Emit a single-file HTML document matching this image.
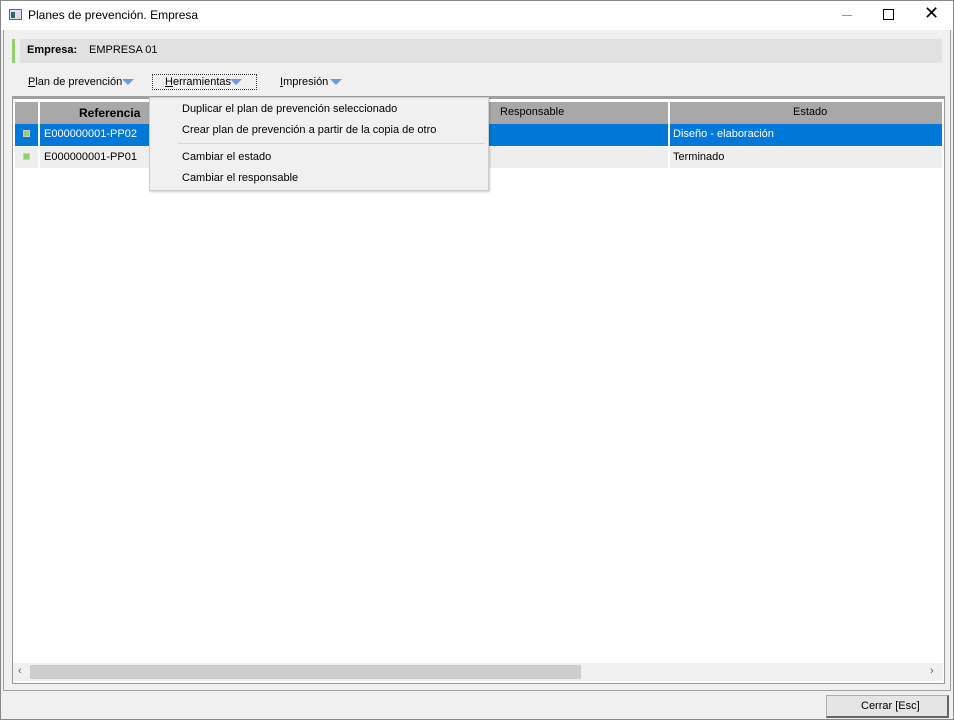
<!DOCTYPE html><html><head><style>
body{margin:0;width:954px;height:720px;position:relative;background:#f0f0f0;font-family:"Liberation Sans",sans-serif;font-size:12px;color:#000;overflow:hidden}
div{position:absolute;box-sizing:border-box}
.t{white-space:nowrap}
</style></head><body>
<div style="left:0;top:0;width:954px;height:720px;border:1px solid #888"></div>
<div style="left:1px;top:1px;width:952px;height:29px;background:#fff"></div>
<div style="left:9px;top:9px;width:13px;height:11px;border:1px solid #666;background:#dde"><div style="left:1px;top:2px;width:4px;height:6px;background:#2a6a6a"></div></div>
<div class="t" style="left:28px;top:8px;font-size:12px">Planes de prevención. Empresa</div>
<div style="left:842px;top:15px;width:10px;height:1px;background:#999"></div>
<div style="left:883px;top:9px;width:11px;height:11px;border:1px solid #000"></div>
<div class="t" style="left:924px;top:3px;font-size:18px;font-weight:100">✕</div>
<div style="left:3px;top:30px;width:948px;height:661px;border:1px solid #a0a0a0;border-top:none"></div>
<div style="left:12px;top:39px;width:3px;height:24px;background:#8fd16a"></div>
<div style="left:20px;top:39px;width:922px;height:24px;background:#e1e1e1"></div>
<div class="t" style="left:27px;top:44px;font-weight:bold;font-size:11px">Empresa:</div>
<div class="t" style="left:89px;top:44px;font-size:11px">EMPRESA 01</div>
<div class="t" style="left:28px;top:76px;font-size:11px"><u>P</u>lan de prevención</div>
<div style="left:122px;top:79px;width:0;height:0;border-left:6px solid transparent;border-right:6px solid transparent;border-top:6px solid #6b9be0"></div>
<div style="left:152px;top:74px;width:105px;height:16px;border:1px dotted #333"></div>
<div class="t" style="left:165px;top:76px;font-size:11px"><u>H</u>erramientas</div>
<div style="left:230px;top:79px;width:0;height:0;border-left:6px solid transparent;border-right:6px solid transparent;border-top:6px solid #6b9be0"></div>
<div class="t" style="left:280px;top:76px;font-size:11px"><u>I</u>mpresión</div>
<div style="left:330px;top:79px;width:0;height:0;border-left:6px solid transparent;border-right:6px solid transparent;border-top:6px solid #6b9be0"></div>
<div style="left:12px;top:96px;width:933px;height:588px;border:1px solid #999;border-top:3px solid #a0a0a0;background:#fff"></div>
<div style="left:15px;top:102px;width:927px;height:22px;background:#a8a8a8"></div>
<div style="left:38px;top:102px;width:2px;height:66px;background:#fff"></div>
<div style="left:668px;top:102px;width:2px;height:66px;background:#fff"></div>
<div class="t" style="left:79px;top:106px;font-weight:bold;font-size:12px">Referencia</div>
<div class="t" style="left:500px;top:106px;font-size:11px">Responsable</div>
<div class="t" style="left:793px;top:106px;font-size:11px">Estado</div>
<div style="left:15px;top:124px;width:927px;height:22px;background:#0078d7"></div>
<div style="left:38px;top:124px;width:2px;height:22px;background:#fff"></div>
<div style="left:668px;top:124px;width:2px;height:22px;background:#fff"></div>
<div style="left:15px;top:146px;width:927px;height:22px;background:#eee;border-top:1px solid #fff"></div>
<div style="left:38px;top:146px;width:2px;height:22px;background:#fff"></div>
<div style="left:668px;top:146px;width:2px;height:22px;background:#fff"></div>
<div style="left:23px;top:130px;width:7px;height:7px;background:#8fd16a;border:1px solid #ccc"></div>
<div style="left:23px;top:153px;width:7px;height:7px;background:#8fd16a;border:1px solid #ccc"></div>
<div class="t" style="left:44px;top:128px;color:#fff;font-size:11px">E000000001-PP02</div>
<div class="t" style="left:44px;top:151px;font-size:11px">E000000001-PP01</div>
<div class="t" style="left:673px;top:128px;color:#fff;font-size:11px">Diseño - elaboración</div>
<div class="t" style="left:673px;top:151px;font-size:11px">Terminado</div>
<div style="left:149px;top:97px;width:340px;height:94px;background:#f0f0f0;border:1px solid #ccc;box-shadow:1px 1px 2px rgba(0,0,0,.2)"></div>
<div class="t" style="left:182px;top:103px;font-size:11px">Duplicar el plan de prevención seleccionado</div>
<div class="t" style="left:182px;top:124px;font-size:11px">Crear plan de prevención a partir de la copia de otro</div>
<div style="left:178px;top:143px;width:307px;height:1px;background:#d7d7d7"></div>
<div class="t" style="left:182px;top:151px;font-size:11px">Cambiar el estado</div>
<div class="t" style="left:182px;top:172px;font-size:11px">Cambiar el responsable</div>
<div style="left:13px;top:663px;width:930px;height:18px;background:#f0f0f0"></div>
<div style="left:30px;top:665px;width:551px;height:14px;background:#cdcdcd"></div>
<div class="t" style="left:18px;top:665px;font-size:11px;color:#555">‹</div>
<div class="t" style="left:930px;top:665px;font-size:11px;color:#555">›</div>
<div style="left:826px;top:695px;width:123px;height:23px;background:#e5e5e5;border:1px solid #adadad;border-right:2px solid #666;border-bottom:2px solid #666"></div>
<div class="t" style="left:861px;top:700px;font-size:11px">Cerrar [Esc]</div>
</body></html>
